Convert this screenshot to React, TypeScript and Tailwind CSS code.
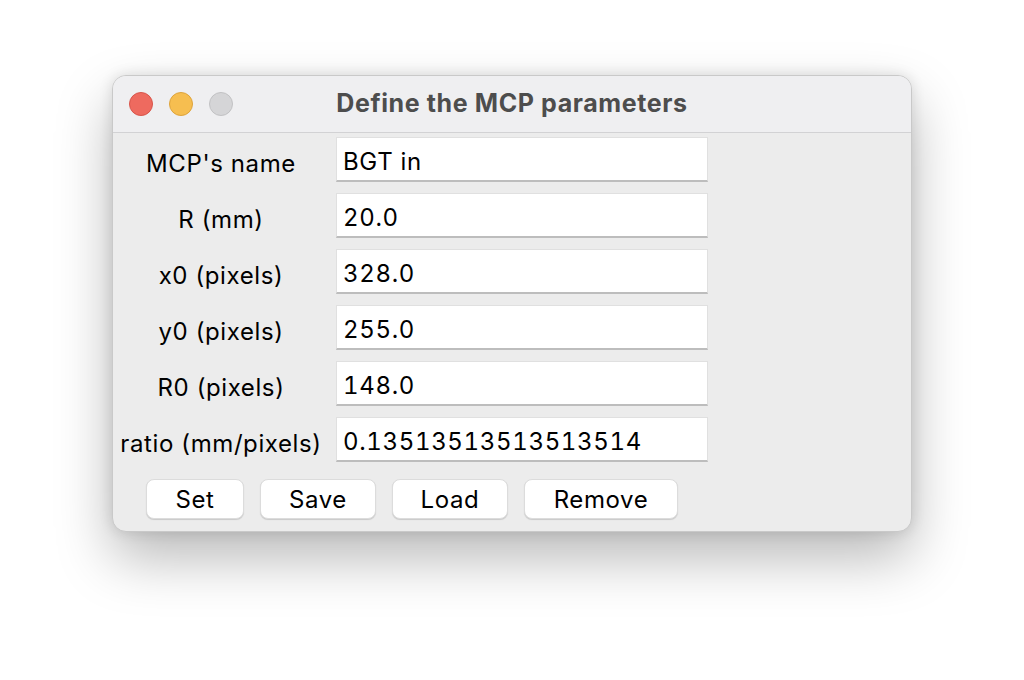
import React from "react";

const rows: { label: string; value: string }[] = [
  { label: "MCP's name", value: "BGT in" },
  { label: "R (mm)", value: "20.0" },
  { label: "x0 (pixels)", value: "328.0" },
  { label: "y0 (pixels)", value: "255.0" },
  { label: "R0 (pixels)", value: "148.0" },
  { label: "ratio (mm/pixels)", value: "0.13513513513513514" },
];

const buttons: { text: string; w: string }[] = [
  { text: "Set", w: "w-[98px]" },
  { text: "Save", w: "w-[116px]" },
  { text: "Load", w: "w-[116px]" },
  { text: "Remove", w: "w-[154px]" },
];

export default function App() {
  return (
    <div
      className="w-[1024px] h-[680px] bg-white pl-[112px] pt-[75px]"
      style={{ fontFamily: "Inter, 'Noto Sans', sans-serif" }}
    >
      <div className="w-[800px] h-[457px] rounded-[14px] bg-[#ececec] border border-[#c9c9c9] shadow-[0_26px_56px_rgba(0,0,0,0.28),0_0_14px_rgba(0,0,0,0.12)] overflow-hidden flex flex-col">
        {/* Title bar */}
        <div className="h-[57px] shrink-0 relative flex items-center justify-center bg-[#efeff1] border-b border-[#d2d2d4]">
          <div className="absolute left-[16px] top-[16px] flex gap-[16px]">
            <span className="w-[24px] h-[24px] rounded-full bg-[#ee6a5f] border border-[#d8554b]" />
            <span className="w-[24px] h-[24px] rounded-full bg-[#f6be50] border border-[#dea43c]" />
            <span className="w-[24px] h-[24px] rounded-full bg-[#d5d5d7] border border-[#c2c2c4]" />
          </div>
          <span className="text-[25px] font-bold text-[#4d4d4d] tracking-[0.6px]">
            Define the MCP parameters
          </span>
        </div>

        {/* Form */}
        <div className="pt-[4px] flex flex-col gap-[11px]">
          {rows.map((r) => (
            <div key={r.label} className="flex items-center">
              <div className="w-[216px] pt-[8px] text-center text-[24px] tracking-[0.6px] text-black whitespace-nowrap">
                {r.label}
              </div>
              <div className="ml-[7px] w-[372px] h-[45px] bg-white border-t border-x border-[#e0e0e0] border-b-[2px] border-b-[#bdbdbd] flex items-center pl-[6px] pt-[5px] text-[24px] tabular-nums tracking-[0.65px] text-black">
                {r.value}
              </div>
            </div>
          ))}
        </div>

        <div className="mt-[17px] pl-[33px] flex gap-[16px]">
          {buttons.map((b) => (
            <button
              key={b.text}
              className={`${b.w} h-[40px] bg-white rounded-[8px] border border-[#dcdcdc] shadow-[0_1px_1px_rgba(0,0,0,0.15)] text-[24px] tracking-[0.6px] text-black flex items-center justify-center pt-[2px]`}
            >
              {b.text}
            </button>
          ))}
        </div>
      </div>
    </div>
  );
}
